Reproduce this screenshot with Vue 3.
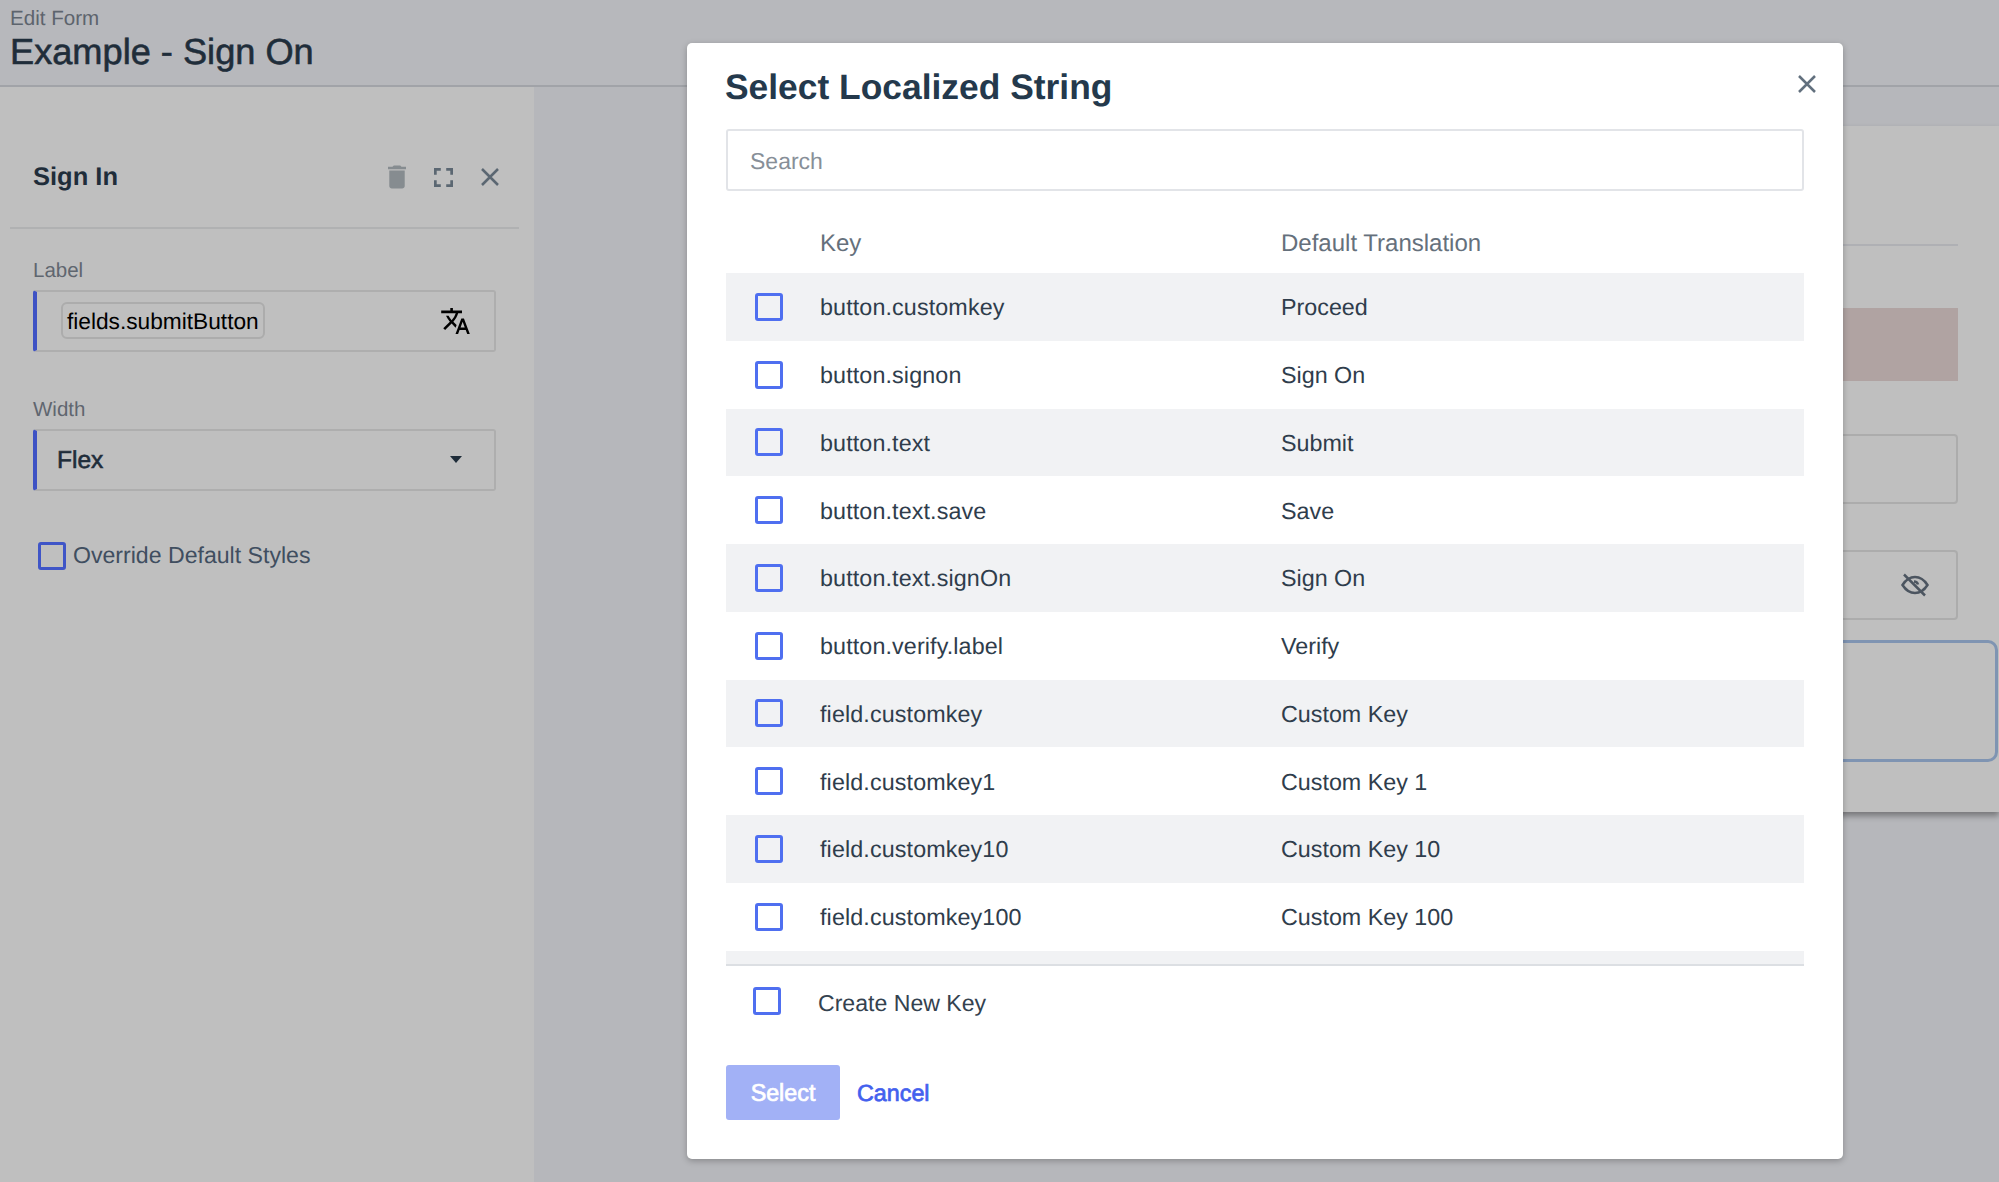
<script setup>
const rows = [
  ['button.customkey', 'Proceed'],
  ['button.signon', 'Sign On'],
  ['button.text', 'Submit'],
  ['button.text.save', 'Save'],
  ['button.text.signOn', 'Sign On'],
  ['button.verify.label', 'Verify'],
  ['field.customkey', 'Custom Key'],
  ['field.customkey1', 'Custom Key 1'],
  ['field.customkey10', 'Custom Key 10'],
  ['field.customkey100', 'Custom Key 100'],
  ['', ''],
]
</script>

<template>
  <div class="page">
    <header class="top">
      <div class="crumb">Edit Form</div>
      <h1 class="form-title">Example - Sign On</h1>
    </header>
    <div class="body">
      <aside class="side">
        <div class="side-head">
          <span class="side-title">Sign In</span>
          <div class="side-tools">
            <svg class="ic-trash" viewBox="5 3 14 18" width="18" height="24"><path d="M6 19c0 1.1.9 2 2 2h8c1.1 0 2-.9 2-2V7H6v12zM19 4h-3.5l-1-1h-5l-1 1H5v2h14V4z" /></svg>
            <svg class="ic-full" viewBox="5 5 14 14" width="19" height="19"><path d="M7 14H5v5h5v-2H7v-3zm-2-4h2V7h3V5H5v5zm12 7h-3v2h5v-5h-2v3zM14 5v2h3v3h2V5h-5z" /></svg>
            <svg class="ic-x" viewBox="0 0 18 18" width="18" height="18"><path d="M1 1l16 16M17 1L1 17" /></svg>
          </div>
        </div>
        <div class="side-form">
          <label class="lbl">Label</label>
          <div class="field">
            <span class="chip">fields.submitButton</span>
            <svg class="ic-translate" viewBox="1 2 22 20" width="29" height="26"><path d="M12.87 15.07l-2.54-2.51.03-.03c1.74-1.94 2.98-4.17 3.71-6.53H17V4h-7V2H8v2H1v1.99h11.17C11.5 7.92 10.44 9.75 9 11.35 8.07 10.32 7.3 9.19 6.69 8h-2c.73 1.63 1.73 3.17 2.98 4.56l-5.09 5.02L4 19l5-5 3.11 3.11.76-2.04zM18.5 10h-2L12 22h2l1.12-3h4.75L21 22h2l-4.5-12zm-2.62 7l1.62-4.33L19.12 17h-3.24z" /></svg>
          </div>
          <label class="lbl lbl-2">Width</label>
          <div class="field field-select">
            <span class="flex-val nudge">Flex</span>
            <span class="caret"></span>
          </div>
          <div class="override">
            <span class="box box-dark"></span>
            <span>Override Default Styles</span>
          </div>
        </div>
      </aside>
      <main class="canvas">
        <section class="card">
          <div class="card-rule"></div>
          <div class="alert"></div>
          <div class="input"></div>
          <div class="input input-2">
            <svg class="ic-eye" viewBox="0 0 28 24" width="28" height="24"><path d="M1.500 12C5 6.500 9.500 4 14 4s9 2.500 12.500 8C23 17.500 18.500 20 14 20S5 17.500 1.500 12z" /><path d="M13 8.500c2 0 3.500 1.200 4 3" /><path d="M3 1.500L24 22.500" /></svg>
          </div>
          <div class="focus-box"></div>
        </section>
      </main>
    </div>

    <div class="modal">
      <div class="modal-head">
        <h2 class="modal-title">Select Localized String</h2>
        <svg class="modal-x" viewBox="0 0 18 18" width="18" height="18"><path d="M1 1l16 16M17 1L1 17" /></svg>
      </div>
      <div class="search"><span class="nudge">Search</span></div>
      <div class="tbl-head">
        <span class="nudge">Key</span>
        <span class="nudge">Default Translation</span>
      </div>
      <div class="tbl-body">
        <div v-for="(r, i) in rows" :key="i" class="row">
          <span v-if="r[0]" class="box"></span>
          <span v-else></span>
          <span class="nudge key-cell">{{ r[0] }}</span>
          <span class="nudge">{{ r[1] }}</span>
        </div>
      </div>
      <div class="create">
        <span class="box"></span>
        <span class="create-text">Create New Key</span>
      </div>
      <div class="actions">
        <button class="btn-select"><span class="nudge">Select</span></button>
        <span class="cancel nudge">Cancel</span>
      </div>
    </div>
  </div>
</template>

<style>
html, body { margin: 0; background: #b7b8bc; }
</style>

<style scoped>
* { box-sizing: border-box; }
.page {
  position: relative;
  width: 1999px;
  height: 1182px;
  overflow: hidden;
  background: #b6b7bb;
  font-family: "Liberation Sans", sans-serif;
  text-rendering: geometricPrecision;
  color: #2f3d4c;
}
.nudge { display: inline-block; padding-top: 2px; }
.top {
  height: 87px;
  padding: 7px 0 0 10px;
  border-bottom: 2px solid #a1a3a8;
  background: #b7b8bc;
}
.crumb {
  font-size: 20.6px;
  line-height: 24px;
  color: #5d646d;
}
.form-title {
  margin: 0;
  font-size: 36.2px;
  line-height: 42px;
  font-weight: 400;
  -webkit-text-stroke: 0.6px #1f2d3a;
  color: #1f2d3a;
}
.body {
  display: flex;
  height: 1095px;
}
.side {
  width: 534px;
  flex: none;
  background: #bfbfbf;
  padding: 0 15px 0 10px;
}
.side-head {
  height: 142px;
  padding: 70px 20px 0 23px;
  display: flex;
  justify-content: space-between;
  align-items: flex-start;
  border-bottom: 2px solid #b0b1b2;
}
.side-title {
  font-size: 25.5px;
  line-height: 40px;
  font-weight: 700;
  color: #1f2d3a;
}
.side-tools {
  display: flex;
  align-items: center;
  gap: 28px;
  height: 40px;
}
.ic-trash { fill: #868c90; }
.ic-full { fill: #5b6772; }
.ic-x, .modal-x {
  fill: none;
  stroke: #5b6772;
  stroke-width: 2.5;
}
.side-form {
  padding: 29px 23px 0 23px;
}
.lbl {
  display: block;
  font-size: 20.5px;
  line-height: 26px;
  color: #5f666f;
}
.lbl-2 { margin-top: 45.5px; }
.field {
  height: 61.5px;
  margin-top: 6px;
  display: flex;
  align-items: center;
  justify-content: space-between;
  border: 2px solid #aeaeae;
  border-left: 4px solid #3e52c4;
  border-radius: 3px;
  padding: 0 24px 0 24px;
}
.chip {
  height: 37px;
  padding: 2px 4px 0;
  display: flex;
  align-items: center;
  border: 2px solid #acacac;
  border-radius: 6px;
  font-size: 22.7px;
  color: #000;
}
.ic-translate { fill: #000; }
.field-select { padding-left: 20px; padding-right: 32px; }
.flex-val {
  font-size: 24.5px;
  -webkit-text-stroke: 0.6px #1f2d3a;
  color: #1f2d3a;
}
.caret {
  width: 0;
  height: 0;
  border-left: 6px solid transparent;
  border-right: 6px solid transparent;
  border-top: 7px solid #1f2d3a;
}
.override {
  margin-top: 51px;
  padding-left: 5px;
  display: flex;
  align-items: center;
  gap: 7px;
  font-size: 23.1px;
  color: #404e60;
}
.canvas {
  flex: 1;
  padding-top: 39px;
  padding-left: 300px;
  min-width: 0;
}
.card {
  height: 686px;
  background: #bfbfbf;
  box-shadow: 0 4px 6px rgba(0, 0, 0, 0.35);
  padding: 0 41px 0 0;
  display: flow-root;
}
.card-rule {
  margin-top: 118px;
  height: 2px;
  background: #afb0b4;
}
.alert {
  margin-top: 62px;
  height: 73px;
  background: #b0a3a2;
}
.input {
  margin-top: 53px;
  height: 70px;
  border: 2px solid #acacac;
  border-radius: 4px;
  display: flex;
  align-items: center;
  justify-content: flex-end;
  padding-right: 27px;
}
.input-2 { margin-top: 46px; }
.ic-eye {
  fill: none;
  stroke: #4c5560;
  stroke-width: 2.5;
}
.focus-box {
  margin-top: 20px;
  margin-right: -40px;
  height: 122px;
  border: 3px solid #7f94b2;
  border-radius: 10px;
}
.modal {
  position: absolute;
  left: 687px;
  top: 43px;
  width: 1156px;
  height: 1116px;
  background: #fff;
  border-radius: 5px;
  box-shadow: 0 2px 6px rgba(0, 0, 0, 0.25);
  padding: 0 39px;
}
.modal-head {
  height: 86px;
  display: flex;
  justify-content: space-between;
  align-items: flex-start;
}
.modal-title {
  margin: 21px 0 0 -1px;
  font-size: 35.4px;
  line-height: 46px;
  font-weight: 700;
  color: #24394c;
}
.modal-x {
  margin: 32px -12px 0 0;
  stroke: #62707e;
}
.search {
  height: 62px;
  border: 2px solid #e2e4e8;
  border-radius: 3px;
  padding-left: 22px;
  display: flex;
  align-items: center;
  font-size: 23px;
  color: #878f98;
}
.tbl-head {
  height: 82px;
  display: grid;
  grid-template-columns: 94px 461px 1fr;
  align-items: center;
  padding-top: 22px;
  font-size: 24px;
  color: #65707c;
}
.tbl-head span:first-child { grid-column: 2; }
.tbl-body {
  height: 693px;
  overflow: hidden;
  border-bottom: 2px solid #dcdfe3;
}
.row {
  height: 67.75px;
  display: grid;
  grid-template-columns: 94px 461px 1fr;
  align-items: center;
  font-size: 23.3px;
  color: #2f3d4c;
}
.row:nth-child(odd) { background: #f1f2f4; }
.key-cell { letter-spacing: 0.12px; }
.box {
  display: block;
  width: 28px;
  height: 28px;
  border: 3px solid #4f6ff0;
  border-radius: 3px;
  justify-self: start;
  margin-left: 29px;
}
.box-dark {
  margin-left: 0;
  flex: none;
  border-color: #3f55c7;
}
.create {
  height: 74px;
  display: flex;
  align-items: center;
  font-size: 23.1px;
}
.create .box { margin-left: 27px; margin-top: -5px; flex: none; }
.create-text { margin-left: 37px; color: #34424f; }
.actions {
  margin-top: 25px;
  display: flex;
  align-items: center;
  gap: 17px;
}
.btn-select {
  width: 114px;
  height: 55px;
  border: 0;
  border-radius: 3px;
  background: #a2b1f6;
  color: #fff;
  font-family: inherit;
  font-size: 23.3px;
  -webkit-text-stroke: 0.7px #fff;
  padding: 0;
}
.cancel {
  font-size: 23.3px;
  -webkit-text-stroke: 0.7px #4360ee;
  color: #4360ee;
}
</style>
